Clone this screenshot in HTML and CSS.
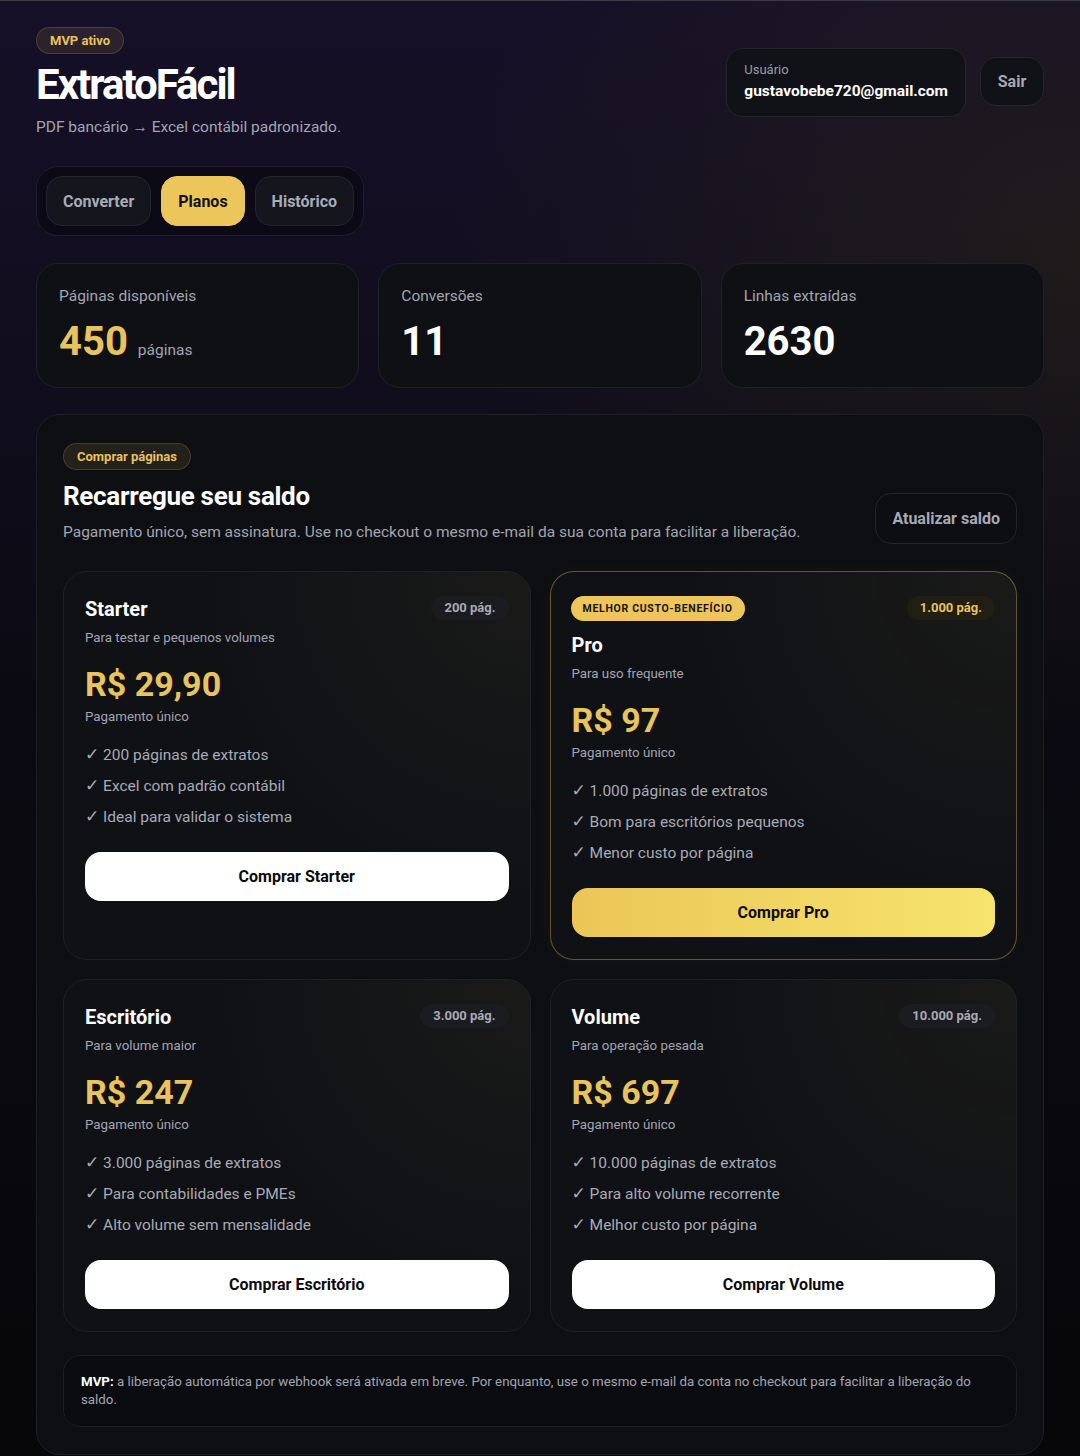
FILE: index.html
```html
<!DOCTYPE html>
<html lang="pt-BR">
<head>
  <meta charset="UTF-8">
  <meta name="viewport" content="width=device-width, initial-scale=1.0">
  <title>ExtratoFácil - Planos</title>
  <link rel="stylesheet" href="styles.css">
</head>
<body>
  <div class="page">
    <header class="topbar">
      <div class="brand">
        <span class="tag">MVP ativo</span>
        <h1>ExtratoFácil</h1>
        <p class="lead">PDF bancário → Excel contábil padronizado.</p>
      </div>
      <div class="account">
        <div class="user-box">
          <span class="user-label">Usuário</span>
          <strong class="user-mail">gustavobebe720@gmail.com</strong>
        </div>
        <button class="btn-ghost btn-sair">Sair</button>
      </div>
    </header>

    <nav class="tabs">
      <button class="tab">Converter</button>
      <button class="tab active">Planos</button>
      <button class="tab">Histórico</button>
    </nav>

    <section class="stats">
      <div class="stat">
        <span class="stat-label">Páginas disponíveis</span>
        <div class="stat-value gold">450 <small>páginas</small></div>
      </div>
      <div class="stat">
        <span class="stat-label">Conversões</span>
        <div class="stat-value">11</div>
      </div>
      <div class="stat">
        <span class="stat-label">Linhas extraídas</span>
        <div class="stat-value">2630</div>
      </div>
    </section>

    <section class="panel">
      <div class="panel-head">
        <div>
          <span class="tag">Comprar páginas</span>
          <h2>Recarregue seu saldo</h2>
          <p class="panel-desc">Pagamento único, sem assinatura. Use no checkout o mesmo e-mail da sua conta para facilitar a liberação.</p>
        </div>
        <button class="btn-ghost btn-refresh">Atualizar saldo</button>
      </div>

      <div class="plans">
        <div class="plan">
          <div class="plan-top">
            <div>
              <h3>Starter</h3>
            </div>
            <span class="pill">200 pág.</span>
          </div>
          <p class="plan-sub">Para testar e pequenos volumes</p>
          <div class="price">R$ 29,90</div>
          <p class="plan-note">Pagamento único</p>
          <ul class="features">
            <li><span class="check">✓</span> 200 páginas de extratos</li>
            <li><span class="check">✓</span> Excel com padrão contábil</li>
            <li><span class="check">✓</span> Ideal para validar o sistema</li>
          </ul>
          <button class="buy">Comprar Starter</button>
        </div>

        <div class="plan featured">
          <div class="plan-top">
            <div>
              <span class="best">MELHOR CUSTO-BENEFÍCIO</span>
              <h3>Pro</h3>
            </div>
            <span class="pill">1.000 pág.</span>
          </div>
          <p class="plan-sub">Para uso frequente</p>
          <div class="price">R$ 97</div>
          <p class="plan-note">Pagamento único</p>
          <ul class="features">
            <li><span class="check">✓</span> 1.000 páginas de extratos</li>
            <li><span class="check">✓</span> Bom para escritórios pequenos</li>
            <li><span class="check">✓</span> Menor custo por página</li>
          </ul>
          <button class="buy">Comprar Pro</button>
        </div>

        <div class="plan">
          <div class="plan-top">
            <div>
              <h3>Escritório</h3>
            </div>
            <span class="pill">3.000 pág.</span>
          </div>
          <p class="plan-sub">Para volume maior</p>
          <div class="price">R$ 247</div>
          <p class="plan-note">Pagamento único</p>
          <ul class="features">
            <li><span class="check">✓</span> 3.000 páginas de extratos</li>
            <li><span class="check">✓</span> Para contabilidades e PMEs</li>
            <li><span class="check">✓</span> Alto volume sem mensalidade</li>
          </ul>
          <button class="buy">Comprar Escritório</button>
        </div>

        <div class="plan">
          <div class="plan-top">
            <div>
              <h3>Volume</h3>
            </div>
            <span class="pill">10.000 pág.</span>
          </div>
          <p class="plan-sub">Para operação pesada</p>
          <div class="price">R$ 697</div>
          <p class="plan-note">Pagamento único</p>
          <ul class="features">
            <li><span class="check">✓</span> 10.000 páginas de extratos</li>
            <li><span class="check">✓</span> Para alto volume recorrente</li>
            <li><span class="check">✓</span> Melhor custo por página</li>
          </ul>
          <button class="buy">Comprar Volume</button>
        </div>
      </div>

      <p class="notice"><b>MVP:</b> a liberação automática por webhook será ativada em breve. Por enquanto, use o mesmo e-mail da conta no checkout para facilitar a liberação do saldo.</p>
    </section>
  </div>
</body>
</html>
```
FILE: styles.css
```css
* { box-sizing: border-box; }
html, body { margin: 0; }
body {
  font-family: Roboto, 'Liberation Sans', Arial, sans-serif;
  color: #fff;
  min-height: 1456px;
  border-top: 1px solid #3b3b45;
  background:
    radial-gradient(ellipse 900px 700px at 1080px 250px, rgba(56, 54, 14, 0.32), transparent 70%),
    linear-gradient(180deg, #161028 0px, #120e20 300px, #0b0a12 700px, #070709 1456px);
}
.page {
  padding: 26px 36px 3px;
}

/* topo */
.topbar {
  display: flex;
  justify-content: space-between;
  align-items: flex-start;
}
.tag {
  display: inline-block;
  padding: 5px 13px;
  border-radius: 999px;
  font-size: 13px;
  font-weight: 700;
  line-height: 15px;
  color: #e9c35c;
  background: rgba(233, 195, 92, 0.1);
  border: 1px solid rgba(233, 195, 92, 0.18);
}
h1 {
  margin: 7px 0 0;
  font-size: 42px;
  line-height: 48px;
  letter-spacing: -2px;
  font-weight: 700;
}
.lead {
  margin: 9px 0 0;
  font-size: 15.5px;
  color: #a3a5b4;
}
.account {
  display: flex;
  align-items: center;
  gap: 14px;
  margin-top: 21px;
}
.user-box {
  display: flex;
  flex-direction: column;
  padding: 13px 17px 14px;
  border-radius: 17px;
  background: #111217;
  border: 1px solid #23242c;
}
.user-label { font-size: 13px; color: #9a9ca8; line-height: 16px; }
.user-mail { font-size: 15.5px; font-weight: 700; line-height: 22px; margin-top: 2px; }
.btn-ghost {
  font-family: inherit;
  font-size: 16px;
  font-weight: 700;
  color: #a7a9b4;
  background: #111217;
  border: 1px solid #23242c;
  border-radius: 16px;
  cursor: pointer;
}
.btn-sair { width: 64px; height: 49px; margin-top: -2px; }

/* abas */
.tabs {
  display: inline-flex;
  gap: 10px;
  margin-top: 30px;
  padding: 9px;
  border-radius: 22px;
  background: rgba(8, 8, 14, 0.55);
  border: 1px solid #1f1f2b;
}
.tab {
  height: 50px;
  padding: 0 16px;
  border-radius: 16px;
  font-family: inherit;
  font-size: 16px;
  font-weight: 700;
  color: #a8abb8;
  background: #15161d;
  border: 1px solid #22232c;
}
.tab.active {
  color: #111;
  background: #edc65b;
  border-color: #edc65b;
}

/* números */
.stats {
  display: grid;
  grid-template-columns: repeat(3, 1fr);
  gap: 19px;
  margin-top: 27px;
}
.stat {
  height: 125px;
  padding: 22px 22px;
  border-radius: 22px;
  background: #0f1014;
  border: 1px solid #1f2027;
}
.stat-label { font-size: 15.5px; color: #a3a5b1; }
.stat-value {
  margin-top: 13px;
  font-size: 40px;
  font-weight: 700;
  line-height: 48px;
}
.stat-value.gold { color: #e9c35c; }
.stat-value small {
  font-size: 15.5px;
  font-weight: 400;
  color: #a3a5b1;
}

/* painel de planos */
.panel {
  margin-top: 26px;
  padding: 28px 26px 27px;
  border-radius: 24px;
  background: #0e0f13;
  border: 1px solid #1e1f26;
}
.panel-head {
  display: flex;
  justify-content: space-between;
  align-items: flex-end;
}
.panel-head h2 {
  margin: 10px 0 0;
  font-size: 26px;
  line-height: 32px;
  letter-spacing: -0.3px;
}
.panel-desc {
  margin: 11px 0 0;
  font-size: 15.5px;
  color: #a3a5b1;
}
.btn-refresh {
  height: 51px;
  padding: 0 16px;
  margin-bottom: -3px;
  background: #0d0e12;
}
.plans {
  display: grid;
  grid-template-columns: 1fr 1fr;
  gap: 19px;
  margin-top: 30px;
}
.plan {
  display: flex;
  flex-direction: column;
  padding: 24px 21px 22px;
  border-radius: 24px;
  border: 1px solid #1f2027;
  background:
    radial-gradient(circle at 100% 0, rgba(233, 195, 92, 0.05), transparent 55%),
    #0f1115;
}
.plan.featured {
  border-color: rgba(233, 195, 92, 0.38);
  box-shadow: 0 0 24px rgba(233, 195, 92, 0.04);
}
.plan-top {
  display: flex;
  justify-content: space-between;
  align-items: flex-start;
}
.plan h3 {
  margin: 0;
  font-size: 20px;
  line-height: 26px;
}
.best {
  display: inline-block;
  margin: 0 0 11px -1px;
  height: 25px;
  padding: 0 12px;
  border-radius: 999px;
  background: #edc65b;
  color: #17130a;
  font-size: 10.5px;
  font-weight: 700;
  letter-spacing: 0.7px;
  line-height: 25px;
}
.pill {
  padding: 4px 13px;
  border-radius: 999px;
  font-size: 13px;
  font-weight: 700;
  line-height: 16px;
  color: #a9abb5;
  background: #1b1c20;
}
.featured .pill {
  color: #e9c35c;
  background: #211e14;
}
.plan-sub {
  margin: 8px 0 0;
  font-size: 13.3px;
  color: #a3a5b1;
}
.price {
  margin-top: 20px;
  font-size: 34px;
  font-weight: 700;
  line-height: 38px;
  color: #e9c35c;
}
.plan-note {
  margin: 6px 0 0;
  font-size: 13.3px;
  color: #a3a5b1;
}
.features {
  list-style: none;
  margin: 16px 0 0;
  padding: 0;
}
.features li {
  font-size: 15.5px;
  line-height: 31px;
  color: #a9abb5;
}
.check {
  font-family: 'DejaVu Sans', sans-serif;
  font-size: 17px;
  line-height: 1;
}
.buy {
  margin-top: 19px;
  height: 49px;
  border: none;
  border-radius: 16px;
  font-family: inherit;
  font-size: 16px;
  font-weight: 700;
  color: #0b0b0b;
  background: #fff;
  cursor: pointer;
}
.featured .buy {
  background: linear-gradient(90deg, #ebc657, #f6e46c);
}

.notice {
  margin: 23px 0 0;
  padding: 17px 17px;
  border-radius: 17px;
  background: #0b0c10;
  border: 1px solid #1d1e25;
  font-size: 13.3px;
  line-height: 18px;
  color: #a3a5b1;
}
.notice b { color: #fff; }
```
